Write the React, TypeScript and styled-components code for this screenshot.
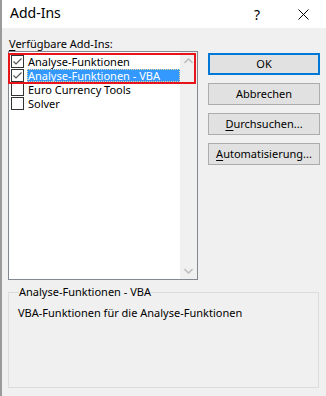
import React from 'react';
import styled, { createGlobalStyle } from 'styled-components';

const GlobalStyle = createGlobalStyle`
    html, body {
        margin: 0;
        padding: 0;
        background: #f0f0f0;
    }
    body {
        font-family: "Noto Sans", "Open Sans", sans-serif;
        font-size: 11px;
        color: #000;
    }
`;

const Dialog = styled.div`
    width: 326px;
    height: 396px;
    box-sizing: border-box;
    border-left: 2px solid #9a9a9a;
    background: #f0f0f0;
    display: flex;
    flex-direction: column;
    overflow: hidden;
`;

const TitleBar = styled.div`
    height: 28px;
    background: #fff;
    display: flex;
    align-items: center;
    padding-left: 8px;
`;

const Title = styled.div`
    flex: 1;
    font-size: 14px;
    line-height: 18px;
    padding-bottom: 2px;
`;

const TitleButton = styled.div`
    width: 46px;
    height: 28px;
    display: flex;
    align-items: center;
    justify-content: center;
    font-size: 14px;
`;

const Body = styled.div`
    flex: 1;
    padding: 9px 6px 0 6px;
    display: flex;
    flex-direction: column;
`;

const FieldLabel = styled.div`
    height: 14px;
    line-height: 14px;
    padding-left: 1px;
`;

const Main = styled.div`
    display: flex;
`;

const ListWrap = styled.div`
    position: relative;
    width: 190px;
    height: 229px;
`;

const ListBox = styled.div`
    box-sizing: border-box;
    width: 100%;
    height: 100%;
    border: 1px solid #828790;
    background: #fff;
    display: flex;
`;

const Items = styled.div`
    flex: 1;
    padding-top: 2px;
    display: flex;
    flex-direction: column;
`;

const Row = styled.div`
    height: 14px;
    display: flex;
    align-items: center;
    padding-left: 2px;
`;

const Box = styled.div`
    box-sizing: border-box;
    width: 13px;
    height: 13px;
    border: 1px solid #333;
    background: #fff;
    flex: none;
    display: flex;
`;

const ItemText = styled.div<{ $selected?: boolean }>`
    margin-left: 3px;
    padding: 0 1px;
    height: 13px;
    line-height: 13px;
    flex: 1;
    white-space: nowrap;
    box-sizing: border-box;
    background: ${p => (p.$selected ? '#3399ff' : 'transparent')};
    color: ${p => (p.$selected ? '#fff' : '#000')};
    outline: ${p => (p.$selected ? '1px dotted #f3d89a' : 'none')};
    outline-offset: -1px;
`;

const ScrollBar = styled.div`
    width: 17px;
    background: #f0f0f0;
    display: flex;
    flex-direction: column;
    justify-content: space-between;
    align-items: center;
`;

const Arrow = styled.div`
    width: 17px;
    height: 17px;
    display: flex;
    align-items: center;
    justify-content: center;
`;

const Highlight = styled.div`
    position: absolute;
    left: 0;
    top: 2px;
    width: 188px;
    height: 31px;
    box-sizing: border-box;
    border: 2px solid #e8141b;
    pointer-events: none;
`;

const Buttons = styled.div`
    margin-left: 10px;
    margin-top: 2px;
    display: flex;
    flex-direction: column;
    gap: 8px;
`;

const Button = styled.div<{ $default?: boolean }>`
    box-sizing: border-box;
    width: 112px;
    height: 22px;
    background: #e1e1e1;
    border: ${p => (p.$default ? '2px solid #0078d7' : '1px solid #adadad')};
    display: flex;
    align-items: center;
    justify-content: center;
    line-height: 14px;
`;

const Accel = styled.span`
    text-decoration: underline;
    text-underline-offset: 2px;
`;

const Group = styled.fieldset`
    margin: 5px 0 0 0;
    padding: 7px 0 0 9px;
    box-sizing: border-box;
    width: 311px;
    height: 103px;
    border: 1px solid #dcdcdc;
    border-radius: 0;
`;

const Legend = styled.legend`
    padding: 0;
    margin-left: 1px;
    font-size: 11px;
    line-height: 14px;
`;

const Description = styled.div`
    line-height: 14px;
`;

const Check = () => (
    <svg width="11" height="11" viewBox="0 0 11 11">
        <path d="M1.5 5.5 L4 8 L9.5 2.5" fill="none" stroke="#555" strokeWidth="1.2" />
    </svg>
);

const Chevron: React.FC<{ up?: boolean }> = ({ up }) => (
    <svg width="9" height="6" viewBox="0 0 9 6">
        <path
            d={up ? 'M0.5 5 L4.5 1 L8.5 5' : 'M0.5 1 L4.5 5 L8.5 1'}
            fill="none"
            stroke="#bfbfbf"
            strokeWidth="1.6"
        />
    </svg>
);

const items = [
    { name: 'Analyse-Funktionen', checked: true },
    { name: 'Analyse-Funktionen - VBA', checked: true, selected: true },
    { name: 'Euro Currency Tools', checked: false },
    { name: 'Solver', checked: false },
];

const App: React.FC = () => (
    <>
        <GlobalStyle />
        <Dialog>
            <TitleBar>
                <Title>Add-Ins</Title>
                <TitleButton>?</TitleButton>
                <TitleButton>
                    <svg width="11" height="11" viewBox="0 0 11 11">
                        <path d="M0.5 0.5 L10.5 10.5 M10.5 0.5 L0.5 10.5" stroke="#000" strokeWidth="1" />
                    </svg>
                </TitleButton>
            </TitleBar>
            <Body>
                <FieldLabel>
                    <Accel>V</Accel>erfügbare Add-Ins:
                </FieldLabel>
                <Main>
                    <ListWrap>
                        <ListBox>
                            <Items>
                                {items.map(item => (
                                    <Row key={item.name}>
                                        <Box>{item.checked && <Check />}</Box>
                                        <ItemText $selected={item.selected}>{item.name}</ItemText>
                                    </Row>
                                ))}
                            </Items>
                            <ScrollBar>
                                <Arrow><Chevron up /></Arrow>
                                <Arrow><Chevron /></Arrow>
                            </ScrollBar>
                        </ListBox>
                        <Highlight />
                    </ListWrap>
                    <Buttons>
                        <Button $default>OK</Button>
                        <Button>Abbrechen</Button>
                        <Button><span><Accel>D</Accel>urchsuchen...</span></Button>
                        <Button><span><Accel>A</Accel>utomatisierung...</span></Button>
                    </Buttons>
                </Main>
                <Group>
                    <Legend>Analyse-Funktionen - VBA</Legend>
                    <Description>VBA-Funktionen für die Analyse-Funktionen</Description>
                </Group>
            </Body>
        </Dialog>
    </>
);

export default App;
